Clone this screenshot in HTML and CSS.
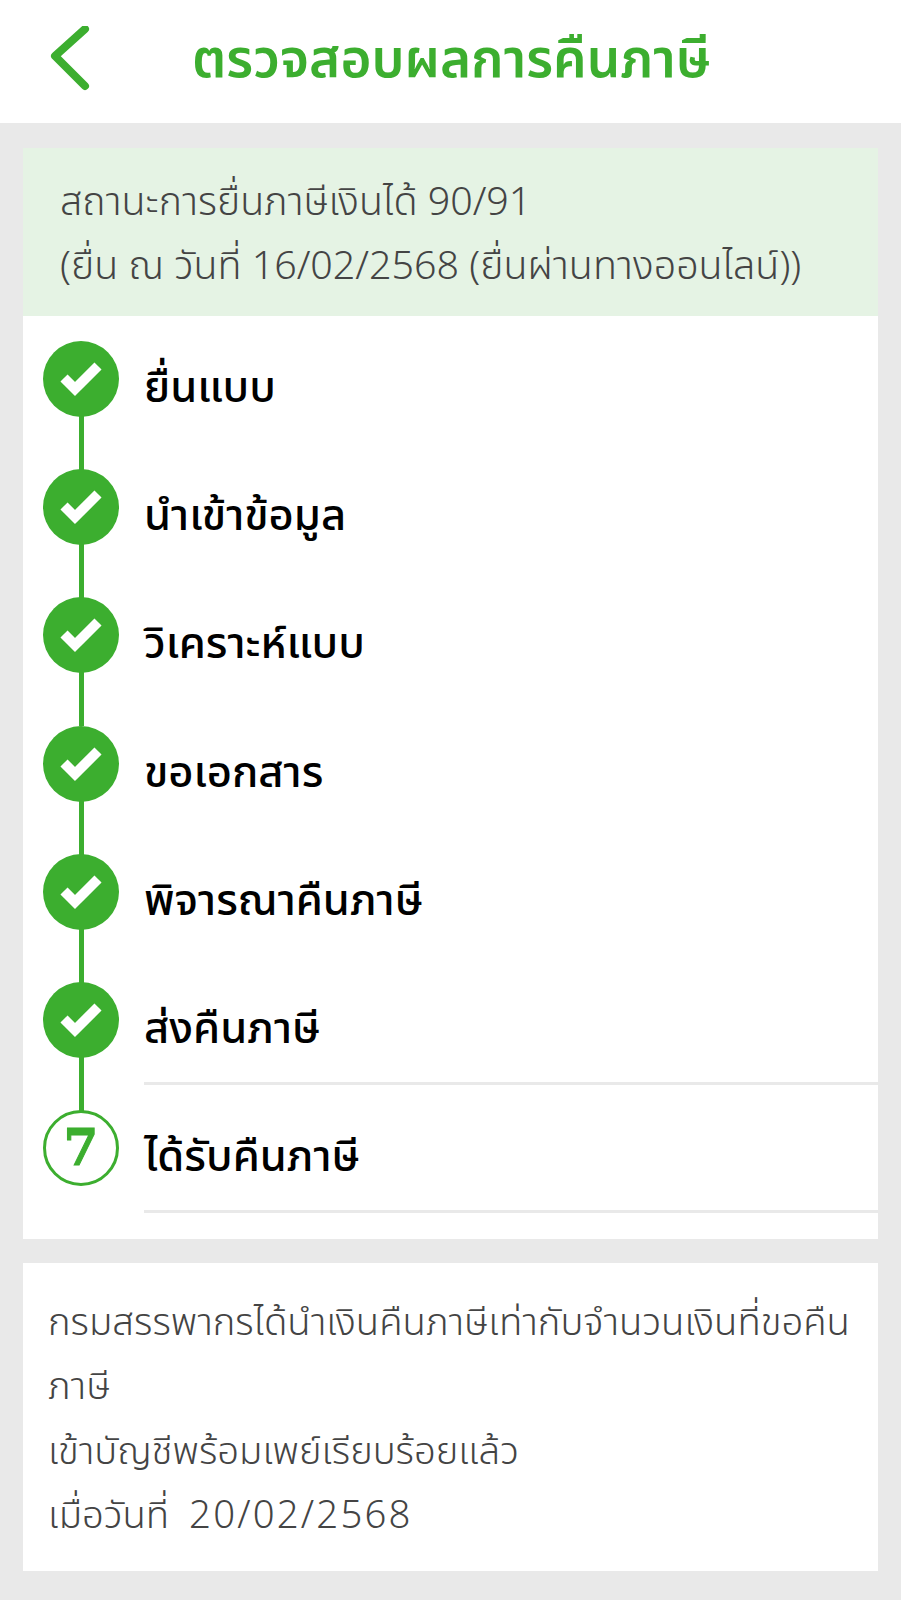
FILE: index.html
```html
<!DOCTYPE html>
<html lang="th">
  <head>
    <meta charset="UTF-8" />
    <title>ตรวจสอบผลการคืนภาษี</title>
    <link rel="stylesheet" href="styles.css">
  </head>
  <body>
    <header class="topbar">
      <svg class="back-icon" width="44" height="72" viewBox="0 0 44 72">
        <polyline points="37,3 7,30 37,60" />
      </svg>
      <h1>ตรวจสอบผลการคืนภาษี</h1>
    </header>

    <main class="content">
      <section class="card">
        <div class="status">
          <p>สถานะการยื่นภาษีเงินได้ 90/91</p>
          <p>(ยื่น ณ วันที่ 16/02/2568 (ยื่นผ่านทางออนไลน์))</p>
        </div>

        <ol class="steps">
          <li class="step">
            <span class="dot"><svg width="48" height="44" viewBox="0 0 48 44"><polyline points="7,21 18,32 41,9" /></svg></span>
            <span class="step-name">ยื่นแบบ</span>
          </li>
          <li class="step">
            <span class="dot"><svg width="48" height="44" viewBox="0 0 48 44"><polyline points="7,21 18,32 41,9" /></svg></span>
            <span class="step-name">นำเข้าข้อมูล</span>
          </li>
          <li class="step">
            <span class="dot"><svg width="48" height="44" viewBox="0 0 48 44"><polyline points="7,21 18,32 41,9" /></svg></span>
            <span class="step-name">วิเคราะห์แบบ</span>
          </li>
          <li class="step">
            <span class="dot"><svg width="48" height="44" viewBox="0 0 48 44"><polyline points="7,21 18,32 41,9" /></svg></span>
            <span class="step-name">ขอเอกสาร</span>
          </li>
          <li class="step">
            <span class="dot"><svg width="48" height="44" viewBox="0 0 48 44"><polyline points="7,21 18,32 41,9" /></svg></span>
            <span class="step-name">พิจารณาคืนภาษี</span>
          </li>
          <li class="step step-ruled">
            <span class="dot"><svg width="48" height="44" viewBox="0 0 48 44"><polyline points="7,21 18,32 41,9" /></svg></span>
            <span class="step-name">ส่งคืนภาษี</span>
          </li>
          <li class="step step-ruled step-last">
            <span class="dot dot-open">7</span>
            <span class="step-name">ได้รับคืนภาษี</span>
          </li>
        </ol>
      </section>

      <section class="card note">
        <p>กรมสรรพากรได้นำเงินคืนภาษีเท่ากับจำนวนเงินที่ขอคืน<br>ภาษี</p>
        <p>เข้าบัญชีพร้อมเพย์เรียบร้อยแล้ว</p>
        <p>เมื่อวันที่&nbsp; <span class="num">20/02/2568</span></p>
      </section>
    </main>
  </body>
</html>
```

FILE: styles.css
```css
* {
  box-sizing: border-box;
}

body {
  margin: 0;
  min-height: 1600px;
  background: #e9e9e9;
  font-family: "Noto Sans Thai", "Noto Sans", "Liberation Sans", "DejaVu Sans", sans-serif;
}

p {
  margin: 0;
}

.topbar {
  display: flex;
  align-items: center;
  height: 123px;
  padding-left: 48px;
  background: #fff;
}

.back-icon {
  flex: none;
}

.back-icon polyline {
  fill: none;
  stroke: #3cae2f;
  stroke-width: 8;
  stroke-linecap: round;
  stroke-linejoin: round;
}

.topbar h1 {
  margin: -2px 0 0 100px;
  font-size: 53px;
  font-weight: 600;
  color: #3cae2f;
}

.content {
  padding: 25px 23px 30px;
}

.card {
  background: #fff;
}

.status {
  height: 168px;
  padding: 23px 37px 0;
  background: #e5f3e4;
  font-size: 39.4px;
  font-weight: 300;
  line-height: 64px;
  color: #444;
  white-space: nowrap;
}

.steps {
  margin: 0;
  padding: 0 0 26px;
  list-style: none;
}

.step {
  position: relative;
  display: flex;
  height: 128.2px;
  padding-left: 121px;
}

.step-name {
  flex: 1;
  padding-top: 41px;
  font-size: 43.5px;
  font-weight: 500;
  line-height: 64px;
  color: #000;
}

.step-ruled {
  height: 128px;
}

.step-ruled .step-name {
  border-bottom: 3px solid #e9e9e9;
}

.dot {
  position: absolute;
  left: 20px;
  top: 25px;
  display: flex;
  align-items: center;
  justify-content: center;
  width: 76px;
  height: 76px;
  border-radius: 50%;
  background: #3cae2f;
}

.dot svg polyline {
  fill: none;
  stroke: #fff;
  stroke-width: 10;
}

/* connector to the next step */
.step:not(.step-last) .dot::after {
  content: "";
  position: absolute;
  left: 36px;
  top: 75px;
  width: 5px;
  height: 54px;
  background: #3cae2f;
}

.dot-open {
  border: 3px solid #3cae2f;
  background: #fff;
  font-family: "DejaVu Serif", serif;
  font-size: 50px;
  font-weight: 700;
  color: #3cae2f;
  -webkit-text-stroke: 1px #3cae2f;
}

.note {
  margin-top: 24px;
  height: 308px;
  padding: 28px 25px;
  font-size: 38.3px;
  font-weight: 300;
  line-height: 64.3px;
  color: #444;
}

.num {
  letter-spacing: 2.2px;
}
```
